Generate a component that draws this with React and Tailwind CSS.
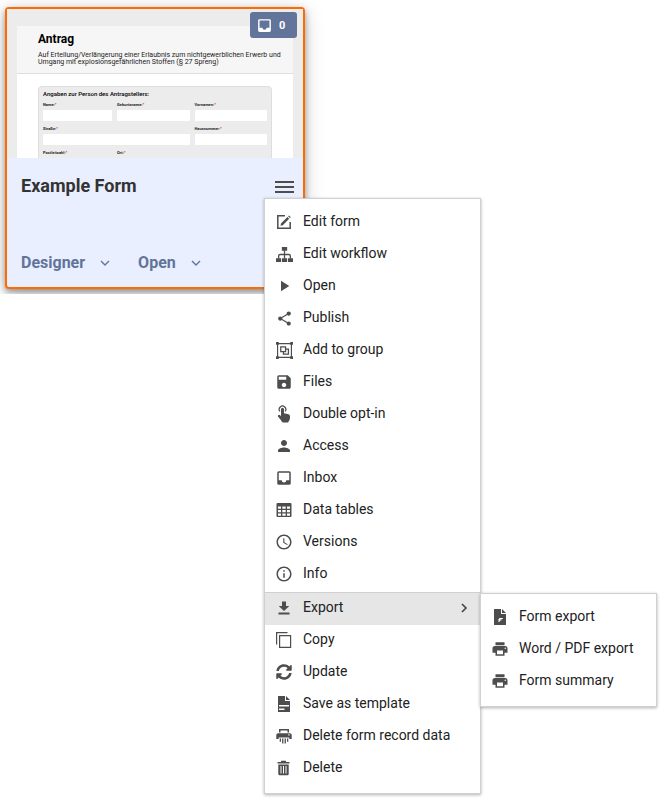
import React from "react";
import {
  MdShare,
  MdSave,
  MdPerson,
  MdAccessTime,
  MdInfoOutline,
  MdPlayArrow,
  MdPrint,
} from "react-icons/md";
import { FaSyncAlt } from "react-icons/fa";

function Glyph({ children, className = "size-4" }) {
  return (
    <svg viewBox="0 0 16 16" className={className} fill="currentColor" aria-hidden="true">
      {children}
    </svg>
  );
}

const EditIcon = () => (
  <Glyph>
    <path d="M9 1.8H1.8v12.4h12.4V8" fill="none" stroke="currentColor" strokeWidth="1.5" />
    <path d="M5 9.4 11.4 3l1.8 1.8-6.4 6.4-2.3.5zM12.1 2.3l.9-.9 1.8 1.8-.9.9z" />
  </Glyph>
);

const WorkflowIcon = () => (
  <Glyph className="size-[17px]">
    <path d="M5.500 1h5v3.500h-5zM0 11.500h4.800V15H0zM5.600 11.500h4.800V15H5.600zM11.200 11.500H16V15h-4.800z" />
    <path d="M8 4v8M2.500 12V9.500q0-1.500 1.500-1.500h8q1.500 0 1.500 1.500V12" fill="none" stroke="currentColor" strokeWidth="1.200" />
  </Glyph>
);

const GroupIcon = () => (
  <Glyph className="size-[17px]">
    <path d="M1.500 1.500h13v13h-13z" fill="none" stroke="currentColor" strokeWidth="1.100" />
    <path d="M0 0h2.600v2.600H0zM13.400 0H16v2.600h-2.600zM0 13.400h2.600V16H0zM13.400 13.400H16V16h-2.600z" />
    <path d="M4.500 4.500h4.500v4.500H4.500zM9 6.800h2.700v4.700H7V9" fill="none" stroke="currentColor" strokeWidth="1.200" />
  </Glyph>
);

const TouchIcon = () => (
  <svg viewBox="0 0 18 18" className="size-[18px]" fill="currentColor" aria-hidden="true">
    <path d="M4.900 6.400a3.300 3.300 0 1 1 5.200 0" fill="none" stroke="currentColor" strokeWidth="1.200" />
    <path d="M6 4.200q0-1.500 1.500-1.500T9 4.200v4l4.500 1.100q1.500.4 1.500 1.900v1.500q0 1.500-.8 2.800l-1.200 2H7.800q-1-1-2-2.500L3 11.500q-.5-1 .4-1.500t1.700.3l.9 1z" />
  </svg>
);

const InboxIcon = ({ className }) => (
  <svg viewBox="0 0 24 24" className={className} fill="currentColor" aria-hidden="true">
    <path d="M19 3H5a2 2 0 0 0-2 2v14a2 2 0 0 0 2 2h14a2 2 0 0 0 2-2V5a2 2 0 0 0-2-2zm0 12h-4a3 3 0 0 1-6 0H5V5h14z" />
  </svg>
);

const TableIcon = () => (
  <Glyph>
    <path
      fillRule="evenodd"
      d="M1.500 1h13q1 0 1 1v12q0 1-1 1h-13q-1 0-1-1V2q0-1 1-1zM2 4.500v2.300h3V4.500zM6.300 4.500v2.300h3.400V4.500zM11 4.500v2.300h3V4.500zM2 8v2.300h3V8zM6.300 8v2.300h3.400V8zM11 8v2.300h3V8zM2 11.500v2.300h3v-2.300zM6.300 11.500v2.300h3.400v-2.300zM11 11.500v2.300h3v-2.300z"
    />
  </Glyph>
);

const ExportIcon = () => (
  <Glyph>
    <path d="M6 1.500h4v4.500h3.300L8 11 2.700 6H6zM2.500 12.500h11v2h-11z" />
  </Glyph>
);

const CopyIcon = () => (
  <Glyph>
    <path d="M.6 12.500V.6h10.900M3.600 3.600h11v11.800h-11z" fill="none" stroke="currentColor" strokeWidth="1.200" />
  </Glyph>
);

const TemplateIcon = () => (
  <Glyph>
    <path
      fillRule="evenodd"
      d="M2 0h7v5h5v11H2zM10 0l4 4h-4zM3 9v1.500h10V9zM3 12.500V14h5.500v-1.500z"
    />
  </Glyph>
);

const ShredderIcon = () => (
  <Glyph>
    <path
      fillRule="evenodd"
      d="M3 1h10v3.500h-1.500v-2h-7v2H3zM2 5.200h12q1.700 0 1.700 1.700V11h-2.400V9.500H2.700V11H.3V6.900Q.3 5.200 2 5.200zM12.300 6.300v1.200h1.300V6.300z"
    />
    <path d="M3.700 10.500h1.300v3.300H3.700zM6.100 10.500h1.300v5H6.100zM8.600 10.500h1.300v5H8.600zM11 10.500h1.300v3.300H11z" />
  </Glyph>
);

const TrashIcon = () => (
  <Glyph>
    <path
      fillRule="evenodd"
      d="M5 .8h5V2h3.500v1.500h-12V2H5zM2.300 4.500h10.400V14q0 1.300-1.300 1.300H3.600Q2.300 15.300 2.300 14zM4.500 6v7.500h1V6zM7 6v7.500h1V6zM9.500 6v7.500h1V6z"
    />
  </Glyph>
);

const FormFileIcon = () => (
  <Glyph>
    <path
      fillRule="evenodd"
      d="M2 0h7v5h5v11H2zM10 0l4 4h-4zM7.300 9l-.3 1.200-1 .2v.9h.8L6.300 13h1.200l.4-1.600h1.400l.3-1.100H8.200l.1-.4h2.500V9z"
    />
  </Glyph>
);

const ICON = "size-[18px]";

const mainItems = [
  { label: "Edit form", icon: <EditIcon /> },
  { label: "Edit workflow", icon: <WorkflowIcon /> },
  { label: "Open", icon: <MdPlayArrow className={ICON} /> },
  { label: "Publish", icon: <MdShare className="size-[17px]" /> },
  { label: "Add to group", icon: <GroupIcon /> },
  { label: "Files", icon: <MdSave className={ICON} /> },
  { label: "Double opt-in", icon: <TouchIcon /> },
  { label: "Access", icon: <MdPerson className={ICON} /> },
  { label: "Inbox", icon: <InboxIcon className={ICON} /> },
  { label: "Data tables", icon: <TableIcon /> },
  { label: "Versions", icon: <MdAccessTime className={ICON} /> },
  { label: "Info", icon: <MdInfoOutline className={ICON} /> },
];

const moreItems = [
  { label: "Export", icon: <ExportIcon />, active: true },
  { label: "Copy", icon: <CopyIcon /> },
  { label: "Update", icon: <FaSyncAlt className="size-4" /> },
  { label: "Save as template", icon: <TemplateIcon /> },
  { label: "Delete form record data", icon: <ShredderIcon /> },
  { label: "Delete", icon: <TrashIcon /> },
];

const exportItems = [
  { label: "Form export", icon: <FormFileIcon /> },
  { label: "Word / PDF export", icon: <MdPrint className={ICON} /> },
  { label: "Form summary", icon: <MdPrint className={ICON} /> },
];

function MenuItem({ item }) {
  return (
    <button
      type="button"
      role="menuitem"
      aria-haspopup={item.active ? "menu" : undefined}
      className={
        item.active
          ? "flex h-8 w-full items-center bg-[#e6e6e6] pr-3 pb-0.5 pl-2.5 text-left"
          : "flex h-8 w-full items-center pr-3 pb-0.5 pl-2.5 text-left"
      }
    >
      <span className="mr-2.5 flex w-[18px] justify-center text-[#4d4d4d]">{item.icon}</span>
      <span className="grow pb-[3px] whitespace-nowrap">{item.label}</span>
      {item.active && (
        <svg viewBox="0 0 8 10" className="h-2.5 w-2" fill="none" stroke="#444" strokeWidth="1.6" aria-hidden="true">
          <path d="m2 1 4 4-4 4" />
        </svg>
      )}
    </button>
  );
}

function PreviewField({ label, wide }) {
  return (
    <div className={wide ? "col-span-2" : ""}>
      <div className="h-2 text-[4px] leading-[5px] font-bold">
        {label}:<span className="text-red-600">*</span>
      </div>
      <div className="h-[11px] rounded-[1px] bg-white" />
    </div>
  );
}

function FormPreview() {
  return (
    <div className="h-[149px] overflow-hidden bg-[#ececec] px-2.5 pt-[17px] text-[#222]">
      <div className="min-h-full bg-white">
        <div className="h-12 border-b border-[#dedede] bg-[#f6f6f6] px-[21px] pt-1.5">
          <div className="text-[12px] leading-[14px] font-bold text-black">Antrag</div>
          <p className="mt-1.5 text-[7px] leading-[7px] whitespace-nowrap">
            Auf Erteilung/Verlängerung einer Erlaubnis zum nichtgewerblichen Erwerb und
            <br />
            Umgang mit explosionsgefährlichen Stoffen (§ 27 Spreng)
          </p>
        </div>
        <div className="mx-[21px] mt-3 rounded-sm border border-[#dedede] bg-[#ececec] px-1 pt-1">
          <div className="mb-[5px] text-[6px] leading-[6px] font-medium text-black">
            Angaben zur Person des Antragstellers:
          </div>
          <div className="grid grid-cols-[69px_1fr_1fr] gap-[5px]">
            <PreviewField label="Name" />
            <PreviewField label="Geburtsname" />
            <PreviewField label="Vornamen" />
            <PreviewField label="Straße" wide />
            <PreviewField label="Hausnummer" />
            <PreviewField label="Postleitzahl" />
            <PreviewField label="Ort" wide />
          </div>
        </div>
      </div>
    </div>
  );
}

function StatusButton({ children }) {
  return (
    <button type="button" className="flex items-center text-base leading-5 font-bold text-[#627499]">
      {children}
      <svg viewBox="0 0 10 6" className="ml-[15px] h-1.5 w-2.5" fill="none" stroke="currentColor" strokeWidth="1.4" aria-hidden="true">
        <path d="m1 1 4 4 4-4" />
      </svg>
    </button>
  );
}

export default function App() {
  return (
    <main className="relative min-h-screen bg-white font-[Roboto,sans-serif] text-[#222]">
      <div className="overflow-hidden pt-[7px] pb-[5px] pl-[5px]">
        <article className="relative w-[300px] rounded-sm border-2 border-[#ff6b00] bg-[#e9efff] shadow-[0_3px_6px_rgba(0,0,0,0.35),0_4px_20px_rgba(0,0,0,0.2)]">
          <FormPreview />
          <button
            type="button"
            aria-label="Inbox, 0 entries"
            className="absolute top-[3px] right-1.5 flex h-[26px] w-[47px] items-center gap-1.5 rounded-[3px] bg-[#627499] pl-1.5 text-[11px] font-bold text-white"
          >
            <InboxIcon className="size-[17px]" />
            <span className="pt-0.5">0</span>
          </button>
          <div className="flex h-[129px] flex-col justify-between pt-4 pr-[9px] pb-3.5 pl-3.5">
            <div className="flex items-center justify-between">
              <h2 className="text-lg leading-6 font-bold text-[#333]">Example Form</h2>
              <button type="button" aria-label="Menu" className="flex w-[19px] flex-col gap-[3px] pt-px">
                <span className="h-0.5 w-full bg-[#4d4d4d]" />
                <span className="h-0.5 w-full bg-[#4d4d4d]" />
                <span className="h-0.5 w-full bg-[#4d4d4d]" />
              </button>
            </div>
            <div className="flex gap-7">
              <StatusButton>Designer</StatusButton>
              <StatusButton>Open</StatusButton>
            </div>
          </div>
        </article>
      </div>

      <div
        role="menu"
        aria-label="Form actions"
        className="absolute top-[198px] left-[264px] w-[217px] border border-[#d0d0d0] bg-white py-2 text-sm leading-5 shadow-[0_1px_3px_rgba(0,0,0,0.3)]"
      >
        {mainItems.map((item) => (
          <MenuItem key={item.label} item={item} />
        ))}
        <div className="mt-px border-t border-[#d0d0d0]">
          {moreItems.map((item) => (
            <MenuItem key={item.label} item={item} />
          ))}
        </div>
        <div
          role="menu"
          aria-label="Export"
          className="absolute top-[394px] left-[215px] w-[177px] border border-[#d0d0d0] bg-white py-2 shadow-[0_1px_3px_rgba(0,0,0,0.3)]"
        >
          {exportItems.map((item) => (
            <MenuItem key={item.label} item={item} />
          ))}
        </div>
      </div>
    </main>
  );
}
